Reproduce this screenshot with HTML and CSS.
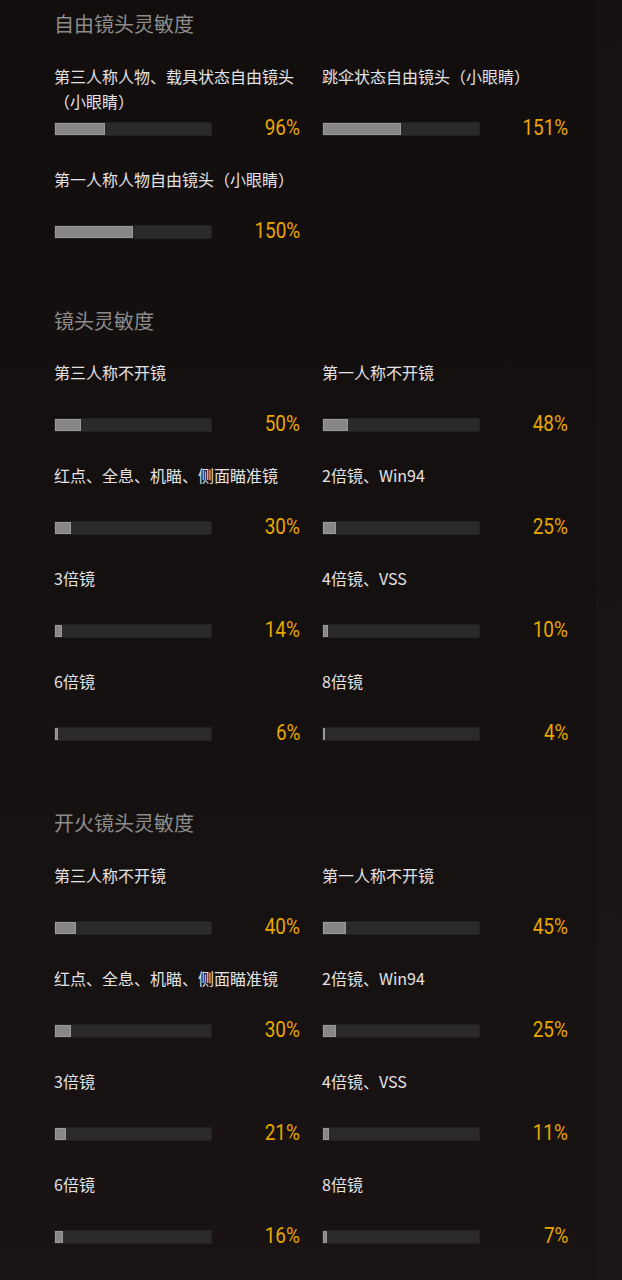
FILE: index.html
```html
<!DOCTYPE html>
<html lang="zh-CN">
<head>
  <meta charset="UTF-8">
  <meta name="viewport" content="width=device-width, initial-scale=1.0">
  <title>灵敏度设置</title>
  <link rel="stylesheet" href="styles.css">
</head>
<body>
  <div class="pagina">

    <div class="secao primeira">
      <div class="titulo">自由镜头灵敏度</div>
      <div class="grade">
        <div class="item">
          <div class="rotulo">第三人称人物、载具状态自由镜头（小眼睛）</div>
          <div class="linha"><div class="barra"><div class="preenche" style="width: 32%"></div></div><span class="valor">96%</span></div>
        </div>
        <div class="item">
          <div class="rotulo">跳伞状态自由镜头（小眼睛）</div>
          <div class="linha"><div class="barra"><div class="preenche" style="width: 50.3%"></div></div><span class="valor">151%</span></div>
        </div>
        <div class="item">
          <div class="rotulo">第一人称人物自由镜头（小眼睛）</div>
          <div class="linha"><div class="barra"><div class="preenche" style="width: 50%"></div></div><span class="valor">150%</span></div>
        </div>
      </div>
    </div>

    <div class="secao">
      <div class="titulo">镜头灵敏度</div>
      <div class="grade">
        <div class="item">
          <div class="rotulo">第三人称不开镜</div>
          <div class="linha"><div class="barra"><div class="preenche" style="width: 16.7%"></div></div><span class="valor">50%</span></div>
        </div>
        <div class="item">
          <div class="rotulo">第一人称不开镜</div>
          <div class="linha"><div class="barra"><div class="preenche" style="width: 16%"></div></div><span class="valor">48%</span></div>
        </div>
        <div class="item">
          <div class="rotulo">红点、全息、机瞄、侧面瞄准镜</div>
          <div class="linha"><div class="barra"><div class="preenche" style="width: 10%"></div></div><span class="valor">30%</span></div>
        </div>
        <div class="item">
          <div class="rotulo">2倍镜、Win94</div>
          <div class="linha"><div class="barra"><div class="preenche" style="width: 8.3%"></div></div><span class="valor">25%</span></div>
        </div>
        <div class="item">
          <div class="rotulo">3倍镜</div>
          <div class="linha"><div class="barra"><div class="preenche" style="width: 4.7%"></div></div><span class="valor">14%</span></div>
        </div>
        <div class="item">
          <div class="rotulo">4倍镜、VSS</div>
          <div class="linha"><div class="barra"><div class="preenche" style="width: 3.3%"></div></div><span class="valor">10%</span></div>
        </div>
        <div class="item">
          <div class="rotulo">6倍镜</div>
          <div class="linha"><div class="barra"><div class="preenche" style="width: 2%"></div></div><span class="valor">6%</span></div>
        </div>
        <div class="item">
          <div class="rotulo">8倍镜</div>
          <div class="linha"><div class="barra"><div class="preenche" style="width: 1.3%"></div></div><span class="valor">4%</span></div>
        </div>
      </div>
    </div>

    <div class="secao">
      <div class="titulo">开火镜头灵敏度</div>
      <div class="grade">
        <div class="item">
          <div class="rotulo">第三人称不开镜</div>
          <div class="linha"><div class="barra"><div class="preenche" style="width: 13.3%"></div></div><span class="valor">40%</span></div>
        </div>
        <div class="item">
          <div class="rotulo">第一人称不开镜</div>
          <div class="linha"><div class="barra"><div class="preenche" style="width: 15%"></div></div><span class="valor">45%</span></div>
        </div>
        <div class="item">
          <div class="rotulo">红点、全息、机瞄、侧面瞄准镜</div>
          <div class="linha"><div class="barra"><div class="preenche" style="width: 10%"></div></div><span class="valor">30%</span></div>
        </div>
        <div class="item">
          <div class="rotulo">2倍镜、Win94</div>
          <div class="linha"><div class="barra"><div class="preenche" style="width: 8.3%"></div></div><span class="valor">25%</span></div>
        </div>
        <div class="item">
          <div class="rotulo">3倍镜</div>
          <div class="linha"><div class="barra"><div class="preenche" style="width: 7%"></div></div><span class="valor">21%</span></div>
        </div>
        <div class="item">
          <div class="rotulo">4倍镜、VSS</div>
          <div class="linha"><div class="barra"><div class="preenche" style="width: 3.7%"></div></div><span class="valor">11%</span></div>
        </div>
        <div class="item">
          <div class="rotulo">6倍镜</div>
          <div class="linha"><div class="barra"><div class="preenche" style="width: 5.3%"></div></div><span class="valor">16%</span></div>
        </div>
        <div class="item">
          <div class="rotulo">8倍镜</div>
          <div class="linha"><div class="barra"><div class="preenche" style="width: 2.3%"></div></div><span class="valor">7%</span></div>
        </div>
      </div>
    </div>

  </div>
</body>
</html>
```

FILE: styles.css
```css
* { box-sizing: border-box; margin: 0; padding: 0; }
body {
  background: linear-gradient(to bottom, #151111, #1d1616);
  color: #e4e2e2;
  font-family: "Noto Sans CJK SC", "Noto Sans", sans-serif;
  min-height: 100vh;
}
.pagina {
  width: 596px; min-height: 1280px;
  background: rgba(0, 0, 0, 0.12);
}
.secao { padding: 37px 0 0 54px; }
.secao.primeira { padding-top: 10px; }
.titulo {
  font-size: 20px; line-height: 28px; color: #8e8b8b;
  margin-bottom: 25.5px;
}
.grade {
  display: grid; grid-template-columns: 246px 246px; column-gap: 22px;
}
.item { padding-bottom: 27px; }
.rotulo {
  font-size: 16px; line-height: 25px; height: 50px; color: #e4e2e2;
}
.linha {
  display: flex; align-items: center; justify-content: space-between;
  height: 22px; margin-top: 4px;
}
.barra {
  width: 158px; height: 14px; background-color: #2c2929;
  border: 1px solid #232020;
}
.preenche {
  height: 100%; min-width: 2px; background-color: #898686;
  border: 1px solid #9b9898;
}
.valor {
  font-family: Roboto, "Noto Sans", sans-serif;
  font-size: 22px; line-height: 22px; color: #e8a600;
  transform: scaleX(0.86); transform-origin: right center;
  margin-top: -2px;
}
```
